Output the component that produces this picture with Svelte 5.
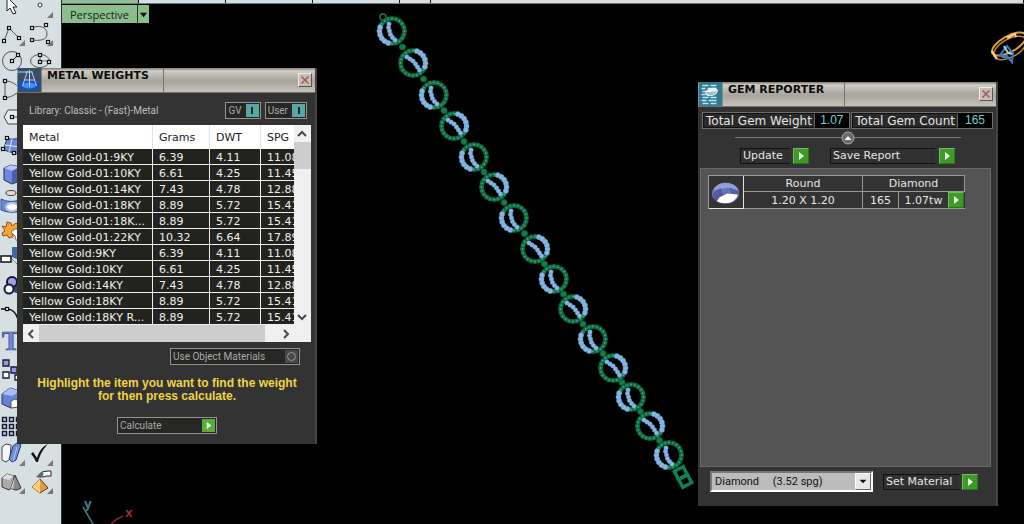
<script>
  const metals = [
    ['Yellow Gold-01:9KY', '6.39', '4.11', '11.08'],
    ['Yellow Gold-01:10KY', '6.61', '4.25', '11.45'],
    ['Yellow Gold-01:14KY', '7.43', '4.78', '12.88'],
    ['Yellow Gold-01:18KY', '8.89', '5.72', '15.41'],
    ['Yellow Gold-01:18K...', '8.89', '5.72', '15.41'],
    ['Yellow Gold-01:22KY', '10.32', '6.64', '17.89'],
    ['Yellow Gold:9KY', '6.39', '4.11', '11.08'],
    ['Yellow Gold:10KY', '6.61', '4.25', '11.45'],
    ['Yellow Gold:14KY', '7.43', '4.78', '12.88'],
    ['Yellow Gold:18KY', '8.89', '5.72', '15.41'],
    ['Yellow Gold:18KY R...', '8.89', '5.72', '15.41']
  ];

  const sq = (x, y) => `<rect x="${x - 1.5}" y="${y - 1.5}" width="3" height="3" fill="#fff" stroke="#111" stroke-width="1.2"/>`;
  const corner = '<path d="M27 21v6h-6z" fill="#777"/>';
  const grid3 = [6, 13, 20].flatMap((x) => [7, 14, 21].map((y) => `<rect x="${x - 1.5}" y="${y - 0.5}" width="4" height="4" fill="#b9c3ee" stroke="#161a35" stroke-width="1.4"/>`)).join('');

  // Each entry: row, column, name and shapes on a 28-unit square.
  const tools = [
    [1, 1, 'Select', '<path d="M9 6V20l3-3 3 6 3-1-3-6h4z" fill="#fff" stroke="#222"/>'],
    [1, 2, 'Point', '<circle cx="14" cy="14" r="2" fill="#fff" stroke="#333"/>' + corner],
    [2, 1, 'Polyline', '<path d="M6 22 11 9l10 10" fill="none" stroke="#555"/>' + sq(6, 22) + sq(11, 9) + sq(21, 19) + corner],
    [2, 2, 'Curve', '<path d="M6 9C12 6 21 7 21 15c0 6-7 7-15 6" fill="none" stroke="#555"/>' + sq(6, 9) + sq(20, 6) + sq(6, 21) + sq(22, 23) + corner],
    [3, 1, 'Circle', '<circle cx="14" cy="14" r="9.5" fill="none" stroke="#555"/><path d="m14 14 6-6" stroke="#222"/>' + sq(14, 14) + sq(20, 8)],
    [3, 2, 'Ellipse', '<ellipse cx="14" cy="14" rx="9.5" ry="6.5" fill="none" stroke="#555"/><path d="M14 8v6h9" fill="none" stroke="#777"/>' + sq(14, 8) + sq(14, 15) + sq(23, 15)],
    [4, 1, 'Arc', '<path d="M7 23V6c6 0 11 3 14 7M7 23c6-1 10-3 14-7" fill="none" stroke="#555"/>' + sq(7, 6) + sq(7, 23)],
    [5, 1, 'Polygon', '<path d="m6 14 4-7h9l4 7-4 7h-9zM14 14h8" fill="#e5ecee" stroke="#444"/>' + sq(14, 14)],
    [6, 1, 'Surface', '<path d="M9 7c5 2 8 1 13 0v17c-6-3-9-2-16-5 0-4 2-7 3-12z" fill="#6f89d0" stroke="#233c7c"/><path d="m14 8-3 13M7 14l15 2" stroke="#d6e2ff" fill="none"/>' + sq(9, 7) + sq(5, 18) + sq(16, 22)],
    [7, 1, 'Box', '<path d="m6 9 7-3 9 2v14l-8 3-8-4z" fill="#6d88dd" stroke="#1c2b68"/><path d="m6 9 8 3 8-4-9-2z" fill="#b5c4f5"/><path d="M14 12v13l8-3V8z" fill="#4961ac"/>'],
    [8, 1, 'Tube', '<ellipse cx="13" cy="6" rx="5" ry="2.5" fill="#ddd" stroke="#444"/><path d="M3 12q10 5 20 0v12q-10 3-20-1z" fill="#6f8bcf" stroke="#354f94"/><ellipse cx="14" cy="20" rx="6" ry="4" fill="#fff" stroke="#b2c2ef" stroke-width="2"/>'],
    [9, 1, 'Explode', '<path d="m4 11 4 1 1-5 4 1 1 3 4-3 3 3-3 4-4 2 1 5-4 1-2-3-4 1-1-3 3-2z" fill="#f4a333" stroke="#91551a"/><path d="m13 17 4-3h6v12l-5-1-1-4z" fill="#fff" stroke="#777"/>'],
    [10, 1, 'Trim', '<path d="M14 4h9v14l-9-4z" fill="#4466a6"/><path d="m13 15 8 8" stroke="#799"/><path d="M3 13h10v6H3z" fill="#fff" stroke="#111" stroke-width="1.5"/>'],
    [11, 1, 'Boolean', '<circle cx="19" cy="18" r="4" fill="#39418c"/><circle cx="14" cy="11" r="5" fill="#a49ce0" stroke="#14143a" stroke-width="2"/><circle cx="11" cy="18" r="4.5" fill="#fff" stroke="#111b40" stroke-width="2"/>'],
    [12, 1, 'Fillet', '<path d="M3 10h6c6 0 9 4 11 10" fill="none" stroke="#111" stroke-width="1.5"/>' + sq(9, 10)],
    [13, 1, 'Text', '<text x="4" y="23" font-family="Liberation Serif, serif" font-size="27" font-weight="700" fill="#7388dc" stroke="#31417f" stroke-width=".7">T</text>'],
    [14, 1, 'Array', '<g stroke="#161a35" stroke-width="1.3"><path d="M5 5h6v6H5zM13 12h6v6h-6z" fill="#8e9ce8"/><path d="M5 17h6v6H5zM17 20h6v5h-6z" fill="#fff"/></g>'],
    [15, 1, 'Solid edit', '<path d="m4 11 8-6 10 3v14l-9 3-9-4z" fill="#6784d3" stroke="#233467"/><path d="m4 11 8-6 10 3-8 5z" fill="#a9bcf3"/><path d="m13 18 4-2 5 2v6l-9 1z" fill="#fff" stroke="#555"/>'],
    [16, 1, 'Grid', grid3],
    [17, 1, 'Align', '<path d="m4 8 4-3 5 1-1 14-4 3-4-2z" fill="#f7f7f7" stroke="#444"/><path d="m15 7 4-3 4 2-5 15-4 2-3-3z" fill="#6e8ddb" stroke="#223b78"/><path d="m19 8-4 14" stroke="#b2c6ff"/>' + corner],
    [17, 2, 'Check', '<path d="m5 15 2-2 4 6C13 12 17 7 22 5c-4 4-8 10-10 18h-2C9 20 7 17 5 15z" fill="#111"/>' + corner],
    [18, 1, 'Primitives', '<path d="m4 11 5-4 7 2v10l-5 4-7-3z" fill="#aaa" stroke="#333"/><path d="m4 11 7 2 5-4-7-2z" fill="#ddd"/><path d="m17 8 6 13q-5 4-10 0z" fill="#8a8a8a" stroke="#333"/><path d="m17 9-2 13-2-1z" fill="#d8d8d8"/>' + corner],
    [18, 2, 'Render', '<path d="m14 12 8 9-8 5-8-6z" fill="#e59b3e" stroke="#583713"/><path d="M14 12v14l-8-6z" fill="#ffd183"/><path d="m16 5 6-1h3v5h-5l-3 1-3-1z" fill="#fff" stroke="#222"/><path d="m10 10 5-5 3 2-3 4z" fill="#666"/>' + corner]
  ];

  const centers = [[392, 31], [413, 63], [434, 95], [454, 126], [474, 157], [494, 187], [514, 218], [535, 249], [554, 279], [573, 309], [593, 339], [613, 368], [631, 397], [650, 426], [669, 455]];
  const beadRing = Array.from({ length: 20 }, (_, i) => i * 18);
  const isStone = (angle, odd) => (odd ? angle >= 280 || angle <= 30 : angle >= 95 && angle <= 205);
  const at = (angle) => [12.5 * Math.cos((angle * Math.PI) / 180), 12.5 * Math.sin((angle * Math.PI) / 180)];
  const inner = [
    [[-3, -7], [-3.5, -3.5], [-2.5, 0], [-1.5, 3.5], [0.5, 6.5], [3, 9]],
    [[-6, -6], [-3, -4], [0, -2], [2.5, 1], [4.5, 4], [6.5, 7]]
  ];

  let gv = $state(true);
  let user = $state(true);
  let useObject = $state(false);
</script>

{#snippet play(label)}
  <button class="play" aria-label={label}><svg viewBox="0 0 14 14"><path d="M5 3v8l5-4z" fill="#efffe5" /></svg></button>
{/snippet}

{#snippet closeButton()}
  <button class="close" aria-label="Close"><svg viewBox="0 0 12 12"><path d="m2.500 2.500 7 7m0-7-7 7" stroke="#a34f49" stroke-width="1.200" /></svg></button>
{/snippet}

{#snippet chevron(d)}
  <svg viewBox="0 0 16 16"><path {d} fill="none" stroke="#484848" stroke-width="2" /></svg>
{/snippet}

<main class="desktop">
  <nav class="toolbar" aria-label="Tools">
    {#each tools as [row, col, name, shapes]}
      <button class="tool" aria-label={name} style="grid-area: {row} / {col}"><svg viewBox="0 0 28 28">{@html shapes}</svg></button>
    {/each}
  </nav>

  <section class="viewport">
    <div class="strip"><i class="green"></i><i></i><i></i><i></i><i class="short"></i><i class="rest"></i></div>
    <div class="view-tab">
      <button class="view-name">Perspective</button>
      <button class="view-menu" aria-label="View menu"><svg viewBox="0 0 10 10"><path d="M1 3h8L5 8z" fill="#111" /></svg></button>
    </div>
  </section>

  <svg class="scene" viewBox="0 0 1024 524" aria-hidden="true">
    <g fill="none" stroke="#16804f">
      <circle cx="383" cy="17" r="3" stroke="#28734c" stroke-width="1.500" />
      {#each centers as [x, y], n}
        {#if n > 0}
          <circle cx={(x + centers[n - 1][0]) / 2} cy={(y + centers[n - 1][1]) / 2} r="3" fill="#167a49" stroke="#0c5f3a" />
        {/if}
        <g transform="translate({x} {y})">
          <circle r="12.500" stroke="#064a2c" stroke-width="4.500" />
          {#each beadRing as angle}
            {@const p = at(angle)}
            {#if !isStone(angle, n % 2)}
              <circle cx={p[0]} cy={p[1]} r="2" fill="#0e6f45" stroke="#14744a" stroke-width=".6" />
              <circle cx={p[0]} cy={p[1]} r=".7" fill="#6cc596" stroke="none" />
            {/if}
          {/each}
          {#each beadRing as angle}
            {@const p = at(angle)}
            {#if isStone(angle, n % 2)}
              <circle cx={p[0]} cy={p[1]} r="2.600" fill="#87b5e4" stroke="#5a96bd" stroke-width=".4" />
            {/if}
          {/each}
          {#each inner[n % 2] as [ix, iy]}
            <circle cx={ix} cy={iy} r="2.300" fill="#87b5e4" stroke="#5a96bd" stroke-width=".4" />
          {/each}
        </g>
      {/each}
      <g transform="translate(683 477) rotate(-28)" stroke="#118052" stroke-width="3.500">
        <rect x="-5" y="-9" width="10" height="9" />
        <rect x="-5" y="0" width="10" height="9" />
      </g>
    </g>
    <g fill="none" stroke="#dda043" stroke-width="2">
      <ellipse cx="1009" cy="44" rx="19" ry="8" transform="rotate(-29 1009 44)" />
      <ellipse cx="1010" cy="48" rx="18" ry="9" transform="rotate(-29 1010 48)" stroke="#c98434" stroke-width="1.500" />
      <path d="m1007 38 8-4 1 3M992 51l5 8" stroke="#ffd28a" />
      <path d="m1000 55 7-9 6 7-1 9-5-6-8-1 4 2 6 1z" stroke="#397bc2" stroke-width="2" />
      <path d="m1004 46 4 7 4 1" stroke="#b8c8da" stroke-width="2" />
    </g>
    <g fill="none" stroke-width="1.500" font-family="DejaVu Sans, sans-serif" font-size="12" font-weight="700">
      <path d="m83 507 10 17" stroke="#447e8a" /><path d="M111 524q5-5 12-8" stroke="#86282b" />
      <text x="84" y="508" fill="#3f7d88">y</text><text x="125" y="517" fill="#8f2f32">x</text>
    </g>
  </svg>

  <section class="window metal" aria-label="Metal Weights">
    <header>
      <svg class="badge" viewBox="0 0 24 24"><path d="M0 0h24v24H0z" fill="#3a4f66" /><ellipse cx="11.500" cy="17" rx="11" ry="5.500" fill="#1450c0" /><ellipse cx="11.500" cy="17.500" rx="7" ry="3" fill="#3f8df5" /><path d="M10 3 5 18M12 2v17M14 3l5 15M8 4h7M0 4h9M7 12h10" stroke="#b4d4f2" fill="none" /></svg>
      <h1>METAL WEIGHTS</h1>
      {@render closeButton()}
    </header>
    <div class="body">
      <div class="library">
        <span>Library: Classic - (Fast)-Metal</span>
        <button class="toggle" aria-pressed={gv} onclick={() => (gv = !gv)}>GV <b class="lamp"></b></button>
        <button class="toggle" aria-pressed={user} onclick={() => (user = !user)}>User <b class="lamp"></b></button>
      </div>
      <div class="list">
        <div class="clip">
          <table class="metals">
            <colgroup><col class="c1" /><col class="c2" /><col class="c3" /><col class="c4" /></colgroup>
            <thead><tr><th>Metal</th><th>Grams</th><th>DWT</th><th>SPG</th></tr></thead>
            <tbody>
              {#each metals as row}
                <tr>{#each row as cell}<td>{cell}</td>{/each}</tr>
              {/each}
            </tbody>
          </table>
        </div>
        <div class="vbar">
          <button aria-label="Scroll up">{@render chevron('m4 10 4-4 4 4')}</button>
          <div class="thumb"></div>
          <button aria-label="Scroll down">{@render chevron('m4 6 4 4 4-4')}</button>
        </div>
        <div class="hbar">
          <button aria-label="Scroll left">{@render chevron('m10 4-4 4 4 4')}</button>
          <div class="thumb"></div>
          <button aria-label="Scroll right">{@render chevron('m6 4 4 4-4 4')}</button>
        </div>
      </div>
      <button class="toggle materials" aria-pressed={useObject} onclick={() => (useObject = !useObject)}>Use Object Materials <b class="ring"></b></button>
      <p>Highlight the item you want to find the weight<br />for then press calculate.</p>
      <button class="toggle calculate">Calculate <b class="go"><svg viewBox="0 0 14 14"><path d="M5 3v8l5-4z" fill="#e8ffdc" /></svg></b></button>
    </div>
  </section>

  <section class="window gem" aria-label="Gem Reporter">
    <header>
      <svg class="badge" viewBox="0 0 24 24"><path d="M0 0h24v24H0z" fill="#337790" /><path d="M4 3.500h6m2 0h6M3 6.500h4m2 0h9M4 9.500h5M3 12.500h4M4 15.500h6m2 0h6M3 18.500h5m2 0h8M4 21.500h6m2 0h6" stroke="#b9edf1" stroke-width="1.500" /><ellipse cx="13" cy="10" rx="6.500" ry="4" fill="#ebf4f3" transform="rotate(-15 13 10)" /><path d="M7 10c2 5 9 4 12-1l-6 1z" fill="#8cc7d1" /></svg>
      <h1>GEM REPORTER</h1>
      {@render closeButton()}
    </header>
    <div class="totals">
      <div class="total"><span>Total Gem Weight</span><output>1.07</output></div>
      <div class="total"><span>Total Gem Count</span><output>165</output></div>
    </div>
    <div class="divider"><button aria-label="Collapse"><svg viewBox="0 0 14 14"><circle cx="7" cy="7" r="6" fill="#696969" stroke="#aaa" /><path d="m3.500 9 3.500-4 3.500 4z" fill="#fff" /></svg></button></div>
    <div class="actions">
      <span class="caption update">Update</span>{@render play('Update')}
      <span class="caption save">Save Report</span>{@render play('Save Report')}
    </div>
    <div class="panel">
      <table class="stones">
        <colgroup><col class="g1" /><col class="g2" /><col class="g3" /><col class="g4" /><col class="g5" /></colgroup>
        <tbody>
          <tr>
            <td rowspan="2" class="picture"><svg viewBox="0 0 34 31"><ellipse cx="17" cy="17" rx="14" ry="10.500" fill="#6473b5" /><path d="M4 14q4-8 13-8 11 0 14 9l-12-4z" fill="#929edb" /><path d="m4 17 8-6 3 9-6 6q-5-3-5-9z" fill="#505c9f" /><path d="m11 21 8-4 11 1q-3 9-13 9-6 0-9-2z" fill="#fff" /><path d="m21 11 9 3v4l-7-1z" fill="#4f63a4" /></svg></td>
            <td>Round</td><td colspan="3">Diamond</td>
          </tr>
          <tr><td>1.20 X 1.20</td><td>165</td><td class="open">1.07tw</td><td class="action">{@render play('Open Round Diamond')}</td></tr>
        </tbody>
      </table>
    </div>
    <footer>
      <div class="select">
        <select aria-label="Material"><option>Diamond&nbsp;&nbsp;&nbsp;&nbsp; (3.52 spg)</option></select>
        <span class="drop"><svg viewBox="0 0 16 16"><path d="M4 6h8l-4 4z" fill="#111" /></svg></span>
      </div>
      <span class="caption material">Set Material</span>{@render play('Set Material')}
    </footer>
  </section>
</main>

<style>
  :global(body) { margin: 0; background: #000; }
  .desktop { position: relative; display: grid; grid-template-columns: 61px 1fr; min-height: 100vh; overflow: hidden; font-family: "DejaVu Sans", Verdana, sans-serif; font-size: 11px; color: #e6e6e6; }
  .desktop * { box-sizing: border-box; }
  button { margin: 0; padding: 0; border: 0; background: none; font: inherit; color: inherit; }
  svg { display: block; }
  .toolbar { display: grid; grid-template-columns: 28px 28px; grid-auto-rows: 28px; align-content: start; margin: -9px 0 0 -2px; background: #d6dfe1; }
  .tool svg { width: 28px; height: 28px; }
  .viewport { background: #000; border-left: 1px solid #27302d; }
  .strip { display: flex; height: 4px; background: #dadcd8; border-bottom: 1px solid #777; }
  .strip i { width: 87px; background: #d3e0e6; border-right: 1px solid #111; }
  .strip i.green { width: 77px; background: #8dbd92; }
  .strip i.short { width: 31px; background: #dadcd8; }
  .strip i.rest { flex: 1; background: #dadcd8; }
  .view-tab { display: inline-flex; height: 18px; margin-top: 1px; background: #8dbd8d; color: #10251b; font: 11px/17px "Open Sans", sans-serif; }
  .view-name { width: 76px; border-right: 1px solid #1c3c25; }
  .view-menu { display: grid; place-items: center; width: 11px; }
  .view-menu svg { width: 9px; height: 9px; }
  .scene { position: absolute; top: 0; left: 0; width: 1024px; height: 524px; pointer-events: none; }

  .window { position: absolute; background: #333; border-right: 2px solid #444; }
  .metal { left: 17px; top: 68px; width: 300px; }
  .gem { left: 698px; top: 82px; width: 300px; }
  header { display: flex; align-items: center; height: 25px; padding-right: 3px; background: linear-gradient(#7d7a74, #d0cdc6 12%, #b4b1aa 40%, #a8a59d 55%, #c5c2bb); border-bottom: 1px solid #77746e; }
  .badge { width: 25px; height: 24px; }
  h1 { align-self: stretch; width: 122px; margin: 0 auto 0 0; padding-left: 5px; border-right: 1px solid #77746f; color: #0c0c0c; font-size: 11px; line-height: 15px; font-weight: 700; white-space: nowrap; }
  .close { width: 14px; height: 14px; background: #c9bcb4; border: 1px solid; border-color: #eee #5b5752 #5b5752 #eee; }
  .close svg { width: 12px; height: 12px; }

  .body { display: flex; flex-direction: column; padding: 9px 4px 10px 6px; }
  .library { display: flex; align-items: center; gap: 4px; padding: 0 4px 0 6px; font: 10px/16px Roboto, sans-serif; color: #bdbdbd; }
  .library span { margin-right: auto; }
  .toggle { display: flex; align-items: center; justify-content: space-between; gap: 4px; height: 17px; padding: 0 1px 0 2px; border: 1px solid #929290; background: #262624; color: #a9a9a7; font: 10px/14px Roboto, sans-serif; white-space: nowrap; }
  .toggle b { display: grid; place-items: center; width: 13px; height: 13px; }
  .lamp { background: #58a7a6; }
  .lamp::after { content: ""; width: 2px; height: 7px; background: #102c2d; }
  .ring { background: #484848; }
  .ring::after { content: ""; width: 7px; height: 7px; border: 1px solid #999; border-radius: 50%; }
  .go { background: #58ac3c; }
  .go svg { width: 13px; height: 13px; }
  .materials { align-self: flex-end; width: 130px; margin: 6px 11px 0 0; }
  .calculate { align-self: flex-start; width: 100px; margin-left: 94px; }
  p { margin: 12px 0 14px; text-align: center; white-space: nowrap; color: #f0d443; font: 700 12px/13px "Liberation Sans", sans-serif; }
  .list { display: grid; grid-template-columns: 1fr 17px; margin-top: 6px; background: #fff; }
  .clip { overflow: hidden; }
  table { border-collapse: separate; border-spacing: 0; table-layout: fixed; }
  .metals { width: 310px; color: #f0f0ee; }
  .c1 { width: 130px; } .c2 { width: 57px; } .c3 { width: 51px; }
  .metals th, .metals td { padding: 0 0 0 6px; text-align: left; white-space: nowrap; font-weight: 400; }
  .metals th { height: 24px; background: #fff; color: #222; border-right: 1px solid #e3e3e3; }
  .metals td { height: 16px; padding-top: 2px; line-height: 13px; background: #22221f; border-bottom: 1px solid #efefef; border-right: 1px solid #efefef; }
  .vbar { display: flex; flex-direction: column; background: #f0f0f0; }
  .vbar button, .hbar button { width: 16px; height: 17px; }
  .vbar .thumb { height: 27px; margin-bottom: auto; background: #cdcdcd; }
  .hbar { grid-column: 1 / -1; display: flex; padding-right: 17px; background: #f0f0f0; }
  .hbar .thumb { flex: 1; margin-right: 13px; background: #cdcdcd; }

  .totals { display: flex; justify-content: space-between; padding: 5px 3px 0 4px; }
  .total { display: flex; height: 17px; border: 1px solid #6d6d6d; font-size: 12px; line-height: 14px; background: #292929; }
  .total span { padding: 0 2px; border: 1px solid #111; border-right-color: #666; }
  .total output { width: 34px; background: #000; color: #77cfce; text-align: center; font: 12px/15px "Liberation Sans", sans-serif; }
  .divider { display: flex; justify-content: center; align-items: center; height: 17px; margin: 0 35px 0 37px; background: linear-gradient(#777, #777) center / 100% 1px no-repeat; }
  .divider button { width: 14px; height: 14px; }
  .actions { display: flex; gap: 3px; padding: 2px 0 0 42px; height: 22px; }
  .caption { height: 16px; padding-left: 2px; border: 1px solid; border-color: #111 #333 #111 #111; background: #303030; line-height: 14px; white-space: nowrap; }
  .update { width: 50px; }
  .save { width: 106px; margin-left: 18px; }
  .play { width: 16px; height: 16px; border: 1px solid; border-color: #73bd5c #287619 #287619 #73bd5c; background: #3d9928; }
  .play svg { width: 14px; height: 14px; }
  .panel { min-height: 299px; margin: 0 5px 0 2px; padding: 6px 0 0 7px; background: #545454; border: 1px solid #686868; }
  .stones { width: 257px; background: #333; border-top: 1px solid #999; border-left: 1px solid #999; text-align: center; }
  .g1 { width: 35px; } .g2 { width: 119px; } .g3 { width: 36px; } .g4 { width: 49px; } .g5 { width: 17px; }
  .stones td { height: 16px; padding: 0; line-height: 15px; border-right: 1px solid #999; border-bottom: 1px solid #999; }
  .stones .picture { border-color: #e3e3e3; }
  .picture svg { width: 33px; height: 30px; }
  .stones .open, .stones .action { border-right: 0; }
  .action .play { display: block; }
  footer { display: flex; align-items: center; gap: 2px; padding: 4px 0 14px 12px; }
  .select { position: relative; width: 163px; margin-right: 8px; }
  select { display: block; appearance: none; width: 100%; height: 21px; padding: 0 3px; border: 2px solid; border-color: #777 #fff #fff #777; border-radius: 0; background: #bcbcbc; color: #111; font: 11px Roboto, sans-serif; }
  .drop { position: absolute; top: 2px; right: 2px; width: 16px; height: 17px; background: #e8e8e8; border: 1px solid; border-color: #fff #666 #666 #fff; pointer-events: none; }
  .drop svg { width: 14px; height: 15px; }
  .material { width: 77px; }
</style>
